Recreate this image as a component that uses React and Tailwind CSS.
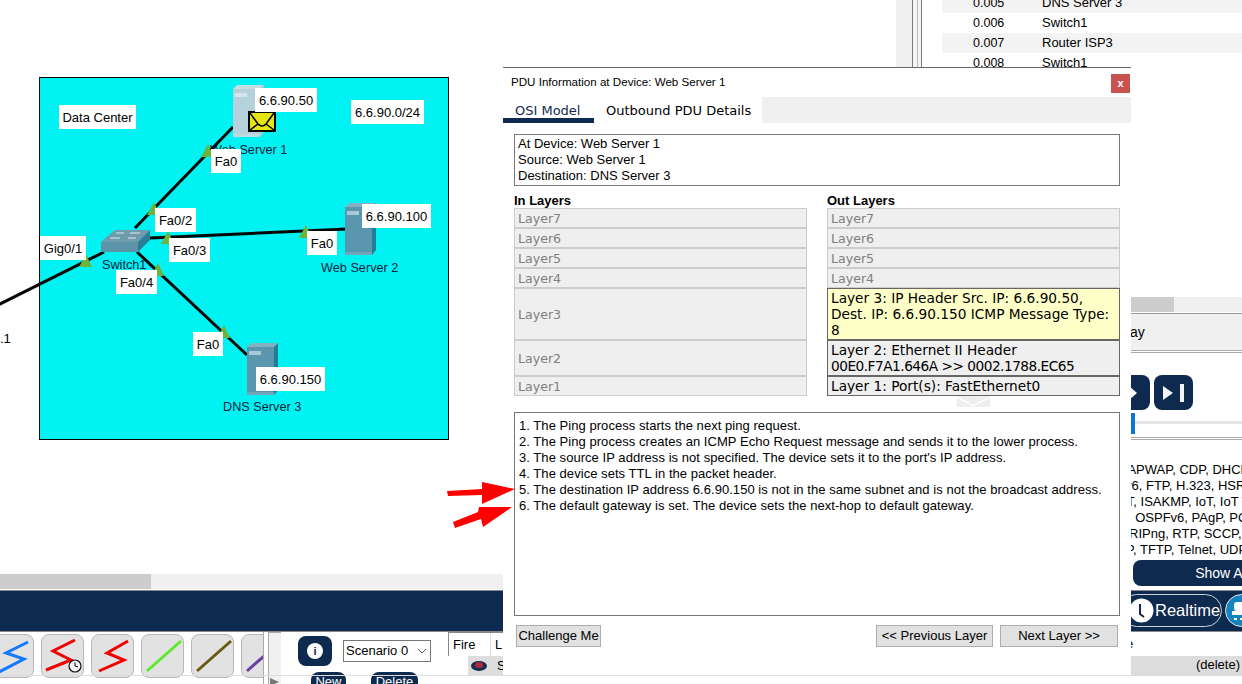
import React from "react";

const arial = "font-['Liberation_Sans',Arial,sans-serif]";

function Server({ x, y, light }) {
  const c = light
    ? { front: "#b5d1db", side: "#a5c9d4", top: "#c7dde4", stripe: "#d5e5ea" }
    : { front: "#5a97ae", side: "#1f7f99", top: "#83b1c1", stripe: "#a7c9d5" };
  return (
    <g transform={`translate(${x} ${y})`}>
      <polygon points="0,4 4,0 31,0 27,4" fill={c.top} />
      <polygon points="27,4 31,0 31,47 27,52" fill={c.side} />
      <rect x="0" y="4" width="27" height="48" fill={c.front} />
      <rect x="2" y="8" width="12" height="4" fill={c.stripe} />
      <rect x="0" y="49" width="27" height="3" fill={c.top} opacity="0.6" />
    </g>
  );
}

function Tri({ x, y }) {
  return <polygon points={`${x},${y - 7} ${x + 6},${y + 6} ${x - 7},${y + 6}`} fill="#6db33f" />;
}

function Tag({ className, children }) {
  return (
    <div className={`absolute flex h-[24px] items-center justify-center bg-white pt-px text-[13px] text-black ${className}`}>
      {children}
    </div>
  );
}

function Name({ className, children }) {
  return <div className={`absolute text-[12.7px] leading-[16px] text-[#10243f] whitespace-nowrap ${className}`}>{children}</div>;
}

function Canvas() {
  return (
    <div className="relative h-[574px] bg-white overflow-hidden">
      <div className="absolute left-[39px] top-[77px] h-[363px] w-[410px] border border-black bg-[#00f2f2]" />
      <Name className="left-[210px] top-[142px]">Web Server 1</Name>
      <Name className="left-[102px] top-[257px]">Switch1</Name>
      <Name className="left-[321px] top-[260px]">Web Server 2</Name>
      <Name className="left-[223px] top-[399px]">DNS Server 3</Name>
      <svg className="absolute left-0 top-0" width="500" height="460">
        <g stroke="#050505" strokeWidth="3">
          <line x1="-2" y1="305" x2="104" y2="252" />
          <line x1="135" y1="228" x2="233" y2="127" />
          <line x1="150" y1="238" x2="347" y2="229" />
          <line x1="137" y1="252" x2="247" y2="355" />
        </g>
        <Server x={233} y={85} light />
        <Server x={345} y={203} />
        <Server x={247} y={343} />
        <g>
          <polygon points="101,242 115,230 150,230 138,242" fill="#6f9cac" />
          <rect x="101" y="242" width="37" height="10" fill="#5d93a8" />
          <polygon points="138,242 150,230 150,240 138,252" fill="#2b7e95" />
          <g stroke="#dfeaee" strokeWidth="1">
            <line x1="116" y1="233" x2="124" y2="233" />
            <line x1="130" y1="233" x2="140" y2="233" />
            <line x1="110" y1="238" x2="120" y2="238" />
            <line x1="128" y1="238" x2="136" y2="238" />
          </g>
        </g>
        <Tri x={86} y={261} />
        <Tri x={154} y={209} />
        <Tri x={168} y={238} />
        <Tri x={158} y={270} />
        <Tri x={306} y={232} />
        <Tri x={224} y={332} />
        <Tri x={208} y={151} />
        <g>
          <rect x="249" y="112" width="26" height="19" fill="#e5e512" stroke="#000" strokeWidth="2" />
          <path d="M250 113 L258 124 Q262 128 266 124 L274 113 M250 130 L258 124 M274 130 L266 124" fill="none" stroke="#000" strokeWidth="1.5" />
        </g>
      </svg>
      <Tag className="left-[59px] top-[105px] w-[77px]">Data Center</Tag>
      <Tag className="left-[255px] top-[88px] w-[62px] bg-[#f8f8ff]">6.6.90.50</Tag>
      <Tag className="left-[351px] top-[100px] w-[73px]">6.6.90.0/24</Tag>
      <Tag className="left-[211px] top-[149px] w-[30px]">Fa0</Tag>
      <Tag className="left-[155px] top-[208px] w-[41px]">Fa0/2</Tag>
      <Tag className="left-[169px] top-[238px] w-[41px]">Fa0/3</Tag>
      <Tag className="left-[307px] top-[231px] w-[30px]">Fa0</Tag>
      <Tag className="left-[362px] top-[204px] w-[69px]">6.6.90.100</Tag>
      <Tag className="left-[40px] top-[236px] w-[46px]">Gig0/1</Tag>
      <Tag className="left-[116px] top-[270px] w-[41px]">Fa0/4</Tag>
      <Tag className="left-[193px] top-[332px] w-[30px]">Fa0</Tag>
      <Tag className="left-[256px] top-[367px] w-[69px]">6.6.90.150</Tag>
      <Tag className="left-0 top-[326px] w-[16px] bg-[#f8f8ff] justify-start">.1</Tag>
    </div>
  );
}

function Rows() {
  const rows = [
    ["0.005", "DNS Server 3", true],
    ["0.006", "Switch1", false],
    ["0.007", "Router ISP3", true],
    ["0.008", "Switch1", false],
  ];
  return (
    <div className="-mt-[7px] ml-[17px] text-[13px] text-black">
      {rows.map(([t, d, shade]) => (
        <div key={t} className={`flex h-[20px] items-center ${shade ? "bg-[#f3f3f3]" : "bg-white"}`}>
          <span className="ml-[31px] w-[69px] text-[12.5px]">{t}</span>
          <span>{d}</span>
        </div>
      ))}
    </div>
  );
}

function Right() {
  return (
    <div className={`flex h-[590px] w-[346px] ${arial}`}>
      <div className="flex w-[29px] shrink-0">
        <div className="w-[16px] bg-[#f0f0f0]" />
        <div className="w-[10px] border-x border-[#777a84] bg-[#f5f5f5] relative">
          <div className="absolute left-[4px] top-0 h-full w-px bg-[#bbb]" />
        </div>
      </div>
      <div className="flex-1 min-w-0 overflow-hidden">
        <div className="h-[297px] overflow-hidden">
          <Rows />
        </div>
        <div className="ml-[206px] h-[15px] bg-[#f0f0f0]">
          <div className="h-full w-[43px] bg-[#cdcdcd]" />
        </div>
        <div className="ml-[206px] mt-px h-[37px] border-t border-[#999] bg-[#f0f0f0] flex items-center text-[14px] leading-[16px] text-black">
          <span className="-ml-[1px]">ay</span>
        </div>
        <div className="ml-[206px] h-[3px] border-y border-[#aaa]" />
        <div className="ml-[206px] flex h-[22px]" />
        <div className="ml-[200px] flex h-[35px] gap-[4px]">
          <div className="flex h-[35px] w-[25px] items-center justify-end rounded-r-lg bg-[#0f2a4f] pr-[13px]">
            <svg width="8" height="18"><polygon points="0,2 8,9 0,16" fill="#fff" /></svg>
          </div>
          <div className="flex h-[35px] w-[39px] items-center justify-center gap-[3px] rounded-lg bg-[#0f2a4f]">
            <svg width="14" height="18"><polygon points="0,2 10,9 0,16" fill="#f2f4f7" /></svg>
            <div className="h-[18px] w-[4px] bg-[#f2f4f7]" />
          </div>
        </div>
        <div className="ml-[206px] relative flex h-[24px] items-center pt-[1px]">
          <div className="absolute left-0 top-[3px] h-[21px] w-[4px] bg-[#0b76d6]" />
          <div className="h-[3px] w-full bg-[#e3e3e3]" />
        </div>
        <div className="ml-[206px] mt-[3px] h-[3px] border-y border-[#aaa]" />
        <div className="mt-[22px] h-[96px] overflow-hidden text-[13px] leading-[16px] whitespace-nowrap text-black">
          <div className="ml-[193px]">CAPWAP, CDP, DHCP, DHCPv6</div>
          <div className="ml-[200px]">v6, FTP, H.323, HSRP, HSRPv6</div>
          <div className="ml-[191px]">IoT, ISAKMP, IoT, IoT TCP, LACP</div>
          <div className="ml-[169px]">OSPF, OSPFv6, PAgP, POP3</div>
          <div className="ml-[204px]">RIPng, RTP, SCCP, SMTP</div>
          <div className="ml-[201px]">P, TFTP, Telnet, UDP, USB</div>
        </div>
        <div className="ml-[208px] mt-[2px] flex h-[26px] w-[178px] items-center justify-center rounded-lg bg-[#0f2a4f] text-[14px] text-white">
          Show All
        </div>
      </div>
    </div>
  );
}

function Tool({ children, className = "" }) {
  return (
    <div className={`relative h-[44px] w-[43px] shrink-0 rounded-lg border border-[#b8b8b8] bg-[#e2e2e2] overflow-hidden ${className}`}>
      <svg className="absolute inset-0" width="43" height="44" fill="none">{children}</svg>
    </div>
  );
}

function DeviceRow() {
  return (
    <div className={`flex h-[45px] ${arial}`}>
      <div className="flex h-[54px] w-[263px] shrink-0 gap-[7px] overflow-hidden pt-[2px]">
        <Tool className="-ml-[9px]">
          <polyline points="36,7 14,18 32,24 7,37" stroke="#1479ff" strokeWidth="3" />
        </Tool>
        <Tool>
          <polyline points="33,5 11,16 29,25 4,35" stroke="#f00000" strokeWidth="3" />
          <circle cx="33" cy="31" r="6" fill="#f4f4f4" stroke="#111" strokeWidth="1.2" />
          <path d="M33 27.5 V31 L36 32" stroke="#111" strokeWidth="1" />
        </Tool>
        <Tool>
          <polyline points="36,6 15,18 32,25 7,36" stroke="#f00000" strokeWidth="3" />
        </Tool>
        <Tool>
          <line x1="39" y1="6" x2="5" y2="36" stroke="#5fe82c" strokeWidth="3" />
        </Tool>
        <Tool>
          <line x1="39" y1="6" x2="5" y2="36" stroke="#6a5a10" strokeWidth="3" />
        </Tool>
        <Tool>
          <line x1="39" y1="6" x2="5" y2="36" stroke="#6a3fa0" strokeWidth="3" />
        </Tool>
      </div>
      <div className="relative flex h-[54px] w-[18px] shrink-0 border-l border-[#aaa]">
        <div className="ml-[4px] w-[13px] border-l border-t border-[#aaa] bg-[#f0f0f0]" />
        <svg className="absolute left-[6px] top-[46px]" width="10" height="8"><polygon points="0,0 9,4 0,8" fill="#777" /></svg>
      </div>
      <div className="w-[167px] shrink-0 relative">
        <div className="flex items-start pl-[17px] pt-[4px]">
          <div className="flex h-[30px] w-[34px] items-center justify-center rounded-lg bg-[#0f2a4f]">
            <div className="flex h-[16px] w-[16px] items-center justify-center rounded-full bg-white text-[11px] font-bold leading-none text-[#0f2a4f]">i</div>
          </div>
          <div className="ml-[11px] mt-[4px] flex h-[22px] w-[88px] items-center justify-between border border-[#777] pl-[2px] pr-[3px] text-[13px] text-black">
            Scenario 0
            <svg width="10" height="6" fill="none"><path d="M1 1 L5 5 L9 1" stroke="#555" /></svg>
          </div>
        </div>
        <div className="mt-[6px] flex pl-[30px] text-[13px] text-white">
          <div className="flex h-[12px] w-[35px] justify-center overflow-hidden rounded-t-lg bg-[#0f2a4f] pt-[3px] leading-[14px]">New</div>
          <div className="ml-[25px] flex h-[12px] w-[47px] justify-center overflow-hidden rounded-t-lg bg-[#0f2a4f] pt-[3px] leading-[14px]">Delete</div>
        </div>
      </div>
      <div className="w-[70px] shrink-0 text-[13px] text-black">
        <div className="h-[24px] border-l border-t border-[#888] flex items-center">
          <span className="w-[42px] border-r border-[#ddd] pl-[4px] leading-[24px]">Fire</span>
          <span className="pl-[4px]">L</span>
        </div>
        <div className="flex h-[19px] items-center bg-[#ddd] ml-[20px] pl-[3px]">
          <svg width="18" height="12"><ellipse cx="8" cy="6" rx="8" ry="5" fill="#16304f" /><ellipse cx="8" cy="5" rx="4" ry="3" fill="#b12a3c" /></svg>
          <span className="ml-[8px]">S</span>
        </div>
      </div>
      <div className="flex-1 pt-[4px] text-[13px] text-black">
        <div className="h-[20px] pl-[608px] leading-[16px]">e</div>
        <div className="h-[19px] bg-[#dcdcdc] pr-[2px] text-right leading-[18px]">(delete)</div>
      </div>
    </div>
  );
}

function NavBar() {
  return (
    <div className={`relative h-[41px] border-b border-[#888] bg-[#0f2a4f] ${arial}`}>
      <div className="absolute left-[1120px] top-[3px] flex h-[33px] w-[102px] items-center rounded-[17px] border border-[#c8d0da] pl-[8px] text-[16.5px] text-white">
        <svg width="25" height="25" className="shrink-0"><circle cx="12.5" cy="12.5" r="12" fill="#fff" /><path d="M11 6 V16 L15 19" stroke="#0f2a4f" strokeWidth="2" fill="none" /></svg>
        <span className="ml-px">Realtime</span>
      </div>
      <div className="absolute left-[1225px] top-[3px] flex h-[33px] w-[33px] items-center justify-center rounded-full border border-[#e5eaf0] bg-[#1583bd]">
        <svg width="22" height="24"><rect x="3" y="3" width="14" height="9" rx="3" fill="#fff" /><rect x="1" y="12" width="20" height="4" fill="#fff" /><rect x="3" y="19" width="3" height="2" fill="#fff" /><rect x="9" y="19" width="3" height="2" fill="#fff" /></svg>
      </div>
    </div>
  );
}

function Layer({ active, yellow, h, children }) {
  return (
    <div
      className={`box-border border px-[3px] font-['DejaVu_Sans',sans-serif] ${h} ${
        active
          ? `border-[#666] pt-px text-[13.7px] leading-[16px] text-black ${yellow ? "bg-[#ffffc8]" : "bg-[#efefef]"}`
          : "flex items-center border-[#ccc] bg-[#efefef] pt-[2px] text-[12.6px] text-[#808080]"
      }`}
    >
      {children}
    </div>
  );
}

function Dialog() {
  const lines = [
    "1. The Ping process starts the next ping request.",
    "2. The Ping process creates an ICMP Echo Request message and sends it to the lower process.",
    "3. The source IP address is not specified. The device sets it to the port's IP address.",
    "4. The device sets TTL in the packet header.",
    "5. The destination IP address 6.6.90.150 is not in the same subnet and is not the broadcast address.",
    "6. The default gateway is set. The device sets the next-hop to default gateway.",
  ];
  return (
    <div className={`absolute left-[503px] top-[67px] h-[608px] w-[628px] border-t border-[#666] bg-white text-[13px] text-black ${arial}`}>
      <div className="flex h-[29px] items-start justify-between pl-[8px] pr-px">
        <span className="mt-[6px] text-[11.6px] leading-[16px]">PDU Information at Device: Web Server 1</span>
        <div className="mt-[6px] flex h-[19px] w-[19px] items-center justify-center bg-[#c9514f] text-[11px] font-bold leading-none text-white">x</div>
      </div>
      <div className="flex h-[26px] font-['DejaVu_Sans',sans-serif] text-[13px]">
        <div className="w-[91px] border-b-[5px] border-[#0f2a4f] pl-[12px] pt-[6px] leading-[15px] text-[#0f2a4f]">OSI Model</div>
        <div className="w-[168px] pl-[12px] pt-[6px] leading-[15px]">Outbound PDU Details</div>
        <div className="flex-1 bg-[#f0f0f0]" />
      </div>
      <div className="ml-[11px] mt-[11px] h-[52px] w-[606px] border border-[#777] pl-[3px] pt-px leading-[16px]">
        <div>At Device: Web Server 1</div>
        <div>Source: Web Server 1</div>
        <div>Destination: DNS Server 3</div>
      </div>
      <div className="ml-[11px] mt-[7px] flex w-[606px] justify-between">
        <div className="w-[293px]">
          <div className="h-[15px] font-bold leading-[15px]">In Layers</div>
          <Layer h="h-[20px]">Layer7</Layer>
          <Layer h="h-[20px]">Layer6</Layer>
          <Layer h="h-[20px]">Layer5</Layer>
          <Layer h="h-[20px]">Layer4</Layer>
          <Layer h="h-[52px]">Layer3</Layer>
          <Layer h="h-[36px]">Layer2</Layer>
          <Layer h="h-[20px]">Layer1</Layer>
        </div>
        <div className="w-[293px]">
          <div className="h-[15px] font-bold leading-[15px]">Out Layers</div>
          <Layer h="h-[20px]">Layer7</Layer>
          <Layer h="h-[20px]">Layer6</Layer>
          <Layer h="h-[20px]">Layer5</Layer>
          <Layer h="h-[20px]">Layer4</Layer>
          <Layer active yellow h="h-[52px]">Layer 3: IP Header Src. IP: 6.6.90.50, Dest. IP: 6.6.90.150 ICMP Message Type: 8</Layer>
          <Layer active h="h-[36px]">
            Layer 2: Ethernet II Header <span className="tracking-[-0.5px]">00E0.F7A1.646A &gt;&gt; 0002.1788.EC65</span>
          </Layer>
          <Layer active h="h-[20px]">Layer 1: Port(s): FastEthernet0</Layer>
        </div>
      </div>
      <div className="ml-[454px] h-[16px] w-[33px]">
        <svg width="33" height="11" fill="none"><rect width="33" height="11" fill="#eeeeee" /><path d="M0 1 L16 10 L33 1" stroke="#fff" strokeWidth="1.5" /></svg>
      </div>
      <div className="ml-[11px] h-[204px] w-[606px] border border-[#777] pl-[4px] pt-[5px] leading-[16px] tracking-[0.05px]">
        {lines.map((l) => <div key={l}>{l}</div>)}
      </div>
      <div className="mt-[9px] flex items-start px-[13px]">
        <div className="flex h-[22px] w-[85px] items-center justify-center border border-[#adadad] bg-[#e1e1e1]">Challenge Me</div>
        <div className="ml-[275px] flex h-[22px] w-[117px] items-center justify-center border border-[#adadad] bg-[#e1e1e1]">&lt;&lt; Previous Layer</div>
        <div className="ml-[7px] flex h-[22px] w-[118px] items-center justify-center border border-[#adadad] bg-[#e1e1e1]">Next Layer &gt;&gt;</div>
      </div>
    </div>
  );
}

function Arrows() {
  return (
    <svg className="absolute left-[440px] top-[475px]" width="80" height="60">
      <polygon points="7,16 42,14 42,7 75,14 42,29 42,20 8,21" fill="#f00" />
      <polygon points="13,47 38,37 39,32 72,32 43,52 41,44 15,53" fill="#f00" />
    </svg>
  );
}

export default function App() {
  return (
    <div className={`relative h-[684px] w-[1242px] overflow-hidden bg-white ${arial}`}>
      <div className="flex h-[590px]">
        <div className={`w-[896px] shrink-0 ${arial}`}>
          <Canvas />
          <div className="h-[15px] bg-[#f0f0f0]">
            <div className="h-full w-[151px] bg-[#cdcdcd]" />
          </div>
        </div>
        <Right />
      </div>
      <div className="h-px bg-[#888]" />
      <NavBar />
      <DeviceRow />
      <div className="absolute left-0 top-[675px] h-px w-full bg-[#ddd]" />
      <Dialog />
      <Arrows />
    </div>
  );
}
